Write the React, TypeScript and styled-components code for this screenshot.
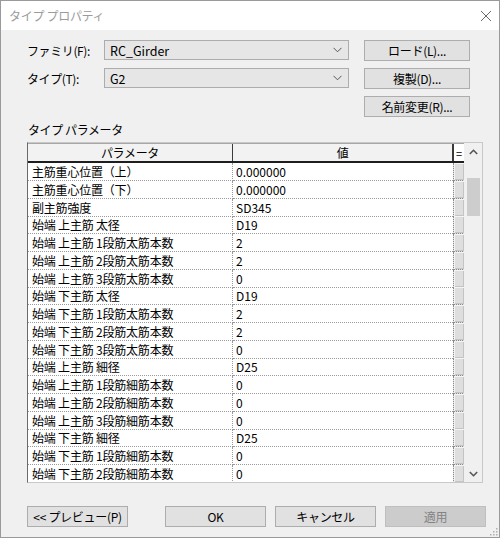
import React from "react";
import styled, { createGlobalStyle } from "styled-components";

const Global = createGlobalStyle`
  html, body { margin: 0; padding: 0; background: #ffffff; }
  * { box-sizing: border-box; }
  body { font-family: "Noto Sans CJK JP", "Noto Sans", sans-serif; font-size: 12px; color: #000; }
`;

const Window = styled.div`
  width: 500px;
  height: 538px;
  border: 1px solid #9a9a9a;
  display: flex;
  flex-direction: column;
  background: #f0f0f0;
  position: relative;
`;

const TitleBar = styled.div`
  height: 29px;
  background: #ffffff;
  display: flex;
  align-items: center;
  justify-content: space-between;
  padding: 0 7px 0 8px;
`;

const Title = styled.span`
  color: #9b9b9b;
  font-size: 12px;
  letter-spacing: -0.3px;
`;

const Body = styled.div`
  flex: 1;
  padding: 10px 13px 0 26px;
  display: flex;
  flex-direction: column;
`;

const TopGrid = styled.div`
  display: grid;
  grid-template-columns: 77px 245px 121px;
  grid-template-rows: 21px 21px 21px;
  column-gap: 0;
  row-gap: 7px;
  & > :nth-child(3n) { margin-left: 15px; }
`;

const Label = styled.label`
  display: flex;
  align-items: center;
  font-size: 12px;
  letter-spacing: -0.4px;
`;

const Select = styled.div`
  height: 20px;
  background: #e6e6e6;
  border: 1px solid #acacac;
  display: flex;
  align-items: center;
  justify-content: space-between;
  padding: 0 6px 0 5px;
  font-size: 12.5px;
`;

const Button = styled.button<{ $disabled?: boolean }>`
  height: 21px;
  background: ${(p) => (p.$disabled ? "#cccccc" : "#e1e1e1")};
  border: 1px solid ${(p) => (p.$disabled ? "#bfbfbf" : "#adadad")};
  color: ${(p) => (p.$disabled ? "#838383" : "#000")};
  font-family: "Noto Sans CJK JP", sans-serif;
  font-size: 12px;
  line-height: 19px;
  padding: 0;
  letter-spacing: -0.3px;
`;

const SectionLabel = styled.div`
  margin-top: 4px;
  height: 18px;
  line-height: 18px;
  letter-spacing: -0.4px;
  padding-left: 1px;
`;

const Frame = styled.div`
  margin-top: 3px;
  width: 456px;
  height: 341px;
  border: 1px solid #c8c8c8;
  border-left: 1px solid #6a6a6a;
  display: flex;
  background: #ffffff;
`;

const Table = styled.div`
  width: 437px;
  display: flex;
  flex-direction: column;
  overflow: hidden;
`;

const HeaderRow = styled.div`
  display: grid;
  grid-template-columns: 205px 220px 12px;
  height: 21px;
  background: #f2f2f2;
  border-bottom: 2px solid #1e1e1e;
  border-top: 1px solid #a8a8a8;
`;

const HeaderCell = styled.div<{ $last?: boolean }>`
  display: flex;
  align-items: center;
  justify-content: center;
  border-right: 1px solid #3a3a3a;
  background: ${(p) => (p.$last ? "#ffffff" : "transparent")};
  font-size: 12px;
  letter-spacing: -0.3px;
  ${(p) => (p.$last ? "border-left: 1px solid #3a3a3a; font-size: 11px;" : "")}
`;

const Row = styled.div`
  display: grid;
  grid-template-columns: 205px 220px 12px;
  height: 17.75px;
  flex-shrink: 0;
`;

const NameCell = styled.div`
  border-bottom: 1px dotted #9a9a9a;
  border-right: 1px dotted #9a9a9a;
  padding-left: 4px;
  display: flex;
  align-items: center;
  white-space: nowrap;
  overflow: hidden;
  font-size: 12px;
  letter-spacing: -0.2px;
`;

const ValueCell = styled.div`
  border-bottom: 1px dotted #9a9a9a;
  padding-left: 3px;
  display: flex;
  align-items: center;
  font-size: 12px;
`;

const EditCell = styled.div`
  border: 1px dotted #8a8a8a;
  border-top: none;
  background: #dedede;
  box-shadow: inset 1px 1px 0 #f4f4f4, inset -1px -1px 0 #c4c4c4;
`;

const Scrollbar = styled.div`
  width: 18px;
  background: #f0f0f0;
  display: flex;
  flex-direction: column;
  align-items: center;
  padding: 0 1px;
`;

const Arrow = styled.div`
  height: 17px;
  width: 100%;
  display: flex;
  align-items: center;
  justify-content: center;
`;

const Track = styled.div`
  flex: 1;
  width: 100%;
  padding: 18px 1px 0 2px;
`;

const Thumb = styled.div`
  height: 38px;
  background: #cdcdcd;
`;

const Footer = styled.div`
  margin-top: 23px;
  display: flex;
  gap: 9px;
  & > :first-child { margin-right: 28px; }
`;

const FooterButton = styled(Button)`
  width: 101px;
`;

const Grip = styled.svg`
  position: absolute;
  right: 1px;
  bottom: 1px;
`;

const rows: [string, string][] = [
  ["主筋重心位置（上）", "0.000000"],
  ["主筋重心位置（下）", "0.000000"],
  ["副主筋強度", "SD345"],
  ["始端 上主筋 太径", "D19"],
  ["始端 上主筋 1段筋太筋本数", "2"],
  ["始端 上主筋 2段筋太筋本数", "2"],
  ["始端 上主筋 3段筋太筋本数", "0"],
  ["始端 下主筋 太径", "D19"],
  ["始端 下主筋 1段筋太筋本数", "2"],
  ["始端 下主筋 2段筋太筋本数", "2"],
  ["始端 下主筋 3段筋太筋本数", "0"],
  ["始端 上主筋 細径", "D25"],
  ["始端 上主筋 1段筋細筋本数", "0"],
  ["始端 上主筋 2段筋細筋本数", "0"],
  ["始端 上主筋 3段筋細筋本数", "0"],
  ["始端 下主筋 細径", "D25"],
  ["始端 下主筋 1段筋細筋本数", "0"],
  ["始端 下主筋 2段筋細筋本数", "0"],
];

const Chevron = () => (
  <svg width="9" height="6" viewBox="0 0 9 6">
    <path d="M0.5 0.8 L4.5 4.8 L8.5 0.8" fill="none" stroke="#555" strokeWidth="1" />
  </svg>
);

export default function App() {
  return (
    <>
      <Global />
      <Window>
        <TitleBar>
          <Title>タイプ プロパティ</Title>
          <svg width="12" height="12" viewBox="0 0 12 12">
            <path d="M1 1 L11 11 M11 1 L1 11" stroke="#6a6a6a" strokeWidth="1" />
          </svg>
        </TitleBar>
        <Body>
          <TopGrid>
            <Label>ファミリ(F):</Label>
            <Select>
              <span>RC_Girder</span>
              <Chevron />
            </Select>
            <Button>ロード(L)...</Button>
            <Label>タイプ(T):</Label>
            <Select>
              <span>G2</span>
              <Chevron />
            </Select>
            <Button>複製(D)...</Button>
            <span />
            <span />
            <Button>名前変更(R)...</Button>
          </TopGrid>
          <SectionLabel>タイプ パラメータ</SectionLabel>
          <Frame>
            <Table>
              <HeaderRow>
                <HeaderCell>パラメータ</HeaderCell>
                <HeaderCell>値</HeaderCell>
                <HeaderCell $last>=</HeaderCell>
              </HeaderRow>
              {rows.map(([n, v], i) => (
                <Row key={i}>
                  <NameCell>{n}</NameCell>
                  <ValueCell>{v}</ValueCell>
                  <EditCell />
                </Row>
              ))}
            </Table>
            <Scrollbar>
              <Arrow>
                <svg width="9" height="6" viewBox="0 0 9 6">
                  <path d="M0.8 5 L4.5 1.3 L8.2 5" fill="none" stroke="#555" strokeWidth="1.6" />
                </svg>
              </Arrow>
              <Track>
                <Thumb />
              </Track>
              <Arrow>
                <svg width="9" height="6" viewBox="0 0 9 6">
                  <path d="M0.8 1 L4.5 4.7 L8.2 1" fill="none" stroke="#555" strokeWidth="1.6" />
                </svg>
              </Arrow>
            </Scrollbar>
          </Frame>
          <Footer>
            <FooterButton>&lt;&lt; プレビュー(P)</FooterButton>
            <FooterButton>OK</FooterButton>
            <FooterButton>キャンセル</FooterButton>
            <FooterButton $disabled>適用</FooterButton>
          </Footer>
        </Body>
        <Grip width="10" height="10" viewBox="0 0 10 10">
          {[[8, 2], [8, 5], [5, 5], [8, 8], [5, 8], [2, 8]].map(([x, y], i) => (
            <rect key={i} x={x} y={y} width="1.5" height="1.5" fill="#b0b0b0" />
          ))}
        </Grip>
      </Window>
    </>
  );
}
